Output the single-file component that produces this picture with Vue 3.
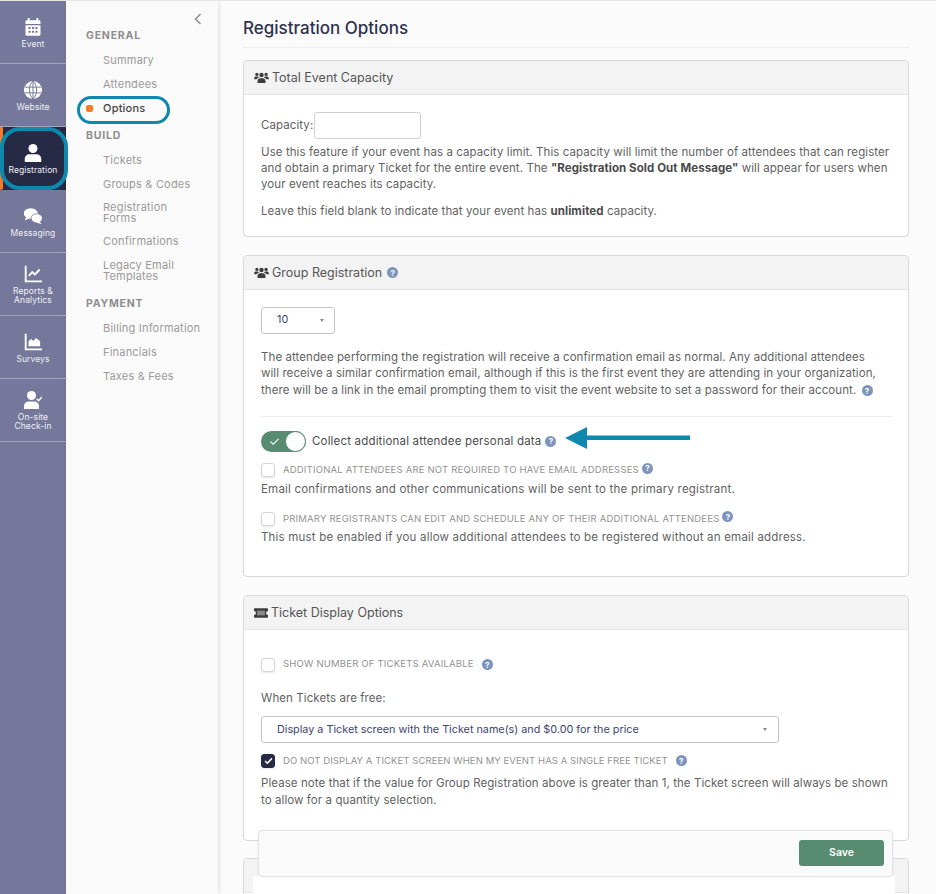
<template>
  <div class="page">
    <aside class="rail">
      <div v-for="item in railItems" :key="item.name" class="rail-item" :class="{ active: item.active }">
        <svg class="rail-icon" viewBox="0 0 24 24" fill="currentColor">
          <template v-if="item.icon === 'calendar'">
            <path d="M5 0h2.500v3h9V0H19v3h1.500A1.500 1.500 0 0 1 22 4.500V8H2V4.500A1.500 1.500 0 0 1 3.500 3H5z" />
            <path fill-rule="evenodd" d="M2 9.500h20v12a2 2 0 0 1-2 2H4a2 2 0 0 1-2-2zM6 12v2.800h2.800V12zm4.600 0v2.800h2.800V12zm4.600 0v2.800H18V12zM6 17v2.800h2.800V17zm4.600 0v2.800h2.800V17zm4.600 0v2.800H18V17z" />
          </template>
          <template v-else-if="item.icon === 'globe'">
            <circle cx="12" cy="12" r="12" />
            <path d="M1 8.200h22M1 15.800h22M12 0v24M12 0C5.500 6 5.500 18 12 24M12 0c6.500 6 6.500 18 0 24" fill="none" stroke="#75789a" stroke-width="1.300" />
          </template>
          <template v-else-if="item.icon === 'user'">
            <circle cx="12" cy="6" r="6" />
            <path d="M1 24v-4c0-4 3-6.500 6.500-6.500h9c3.500 0 6.500 2.500 6.500 6.500v4z" />
          </template>
          <template v-else-if="item.icon === 'comments'">
            <ellipse cx="9" cy="8.500" rx="9.500" ry="7" />
            <path d="M3 13 1 18l6.500-3z" />
            <ellipse cx="17" cy="15" rx="7.500" ry="6" stroke="#75789a" stroke-width="1" />
            <path d="M20.500 19l3 3.500-7-1.500z" />
          </template>
          <template v-else-if="item.icon === 'chart-line'">
            <path d="M1 1h2.500v19.500H24V23H1z" />
            <path d="M6.500 14.500l4.500-5 3.500 3 6.500-6.500" fill="none" stroke="currentColor" stroke-width="2.600" />
          </template>
          <template v-else-if="item.icon === 'chart-area'">
            <path d="M1 1h2.500v19.500H24V23H1z" />
            <path d="M6 17.500V11l3.500-3 3 2.500L16 6.500l5.500 4.500v6.500z" />
          </template>
          <template v-else>
            <circle cx="10" cy="6" r="6" />
            <path d="M0 24v-3.500C0 16.500 3 14 6.500 14h7c3.500 0 6.500 2.500 6.500 6.500V24z" />
            <path d="M17 10.500l2.500 2.500 4.500-5" fill="none" stroke="currentColor" stroke-width="1.900" />
          </template>
        </svg>
        <span class="rail-label">{{ item.name }}</span>
      </div>
    </aside>

    <nav class="subnav">
      <svg class="collapse" viewBox="0 0 8 12"><path d="M6.500 1 1.500 6l5 5" fill="none" stroke="#8d8d8d" stroke-width="1.500" /></svg>
      <template v-for="group in navGroups" :key="group.title">
        <div class="nav-title">{{ group.title }}</div>
        <div v-for="link in group.links" :key="link" class="nav-link" :class="{ current: link === 'Options', tight: link === 'Registration Forms' }">
          {{ link }}
        </div>
      </template>
    </nav>

    <main class="content">
      <h1>Registration Options</h1>

      <section class="card first">
        <header>
          <svg class="users" viewBox="0 0 24 18" fill="currentColor"><use href="#users-shape" /></svg>
          Total Event Capacity
        </header>
        <div class="body">
          <div class="capacity">Capacity: <span class="input"></span></div>
          <p>Use this feature if your event has a capacity limit. This capacity will limit the number of attendees that can register and obtain a primary Ticket for the entire event. The <b>"Registration Sold Out Message"</b> will appear for users when your event reaches its capacity.</p>
          <p class="gap">Leave this field blank to indicate that your event has <b>unlimited</b> capacity.</p>
        </div>
      </section>

      <section class="card second">
        <header>
          <svg class="users" viewBox="0 0 24 18" fill="currentColor">
            <defs>
              <g id="users-shape">
                <circle cx="12" cy="5" r="3.600" />
                <path d="M5.500 18v-3c0-3 2-4.800 4-4.800h5c2 0 4 1.800 4 4.800v3z" />
                <circle cx="4.500" cy="4" r="2.700" />
                <circle cx="19.500" cy="4" r="2.700" />
                <path d="M0 12v-1.500C0 8.500 1.500 7.500 3 7.500h3.500c.4 1 1 1.700 1.500 2C5.500 10 4.300 11 4 12zM24 12v-1.500c0-2-1.500-3-3-3h-3.500c-.4 1-1 1.700-1.500 2 2.500.5 3.700 1.500 4 2.500z" />
              </g>
            </defs>
            <use href="#users-shape" />
          </svg>
          Group Registration <i class="help">?</i>
        </header>
        <div class="body">
          <div class="select small"><span>10</span><em></em></div>
          <p class="intro">The attendee performing the registration will receive a confirmation email as normal. Any additional attendees will receive a similar confirmation email, although if this is the first event they are attending in your organization, there will be a link in the email prompting them to visit the event website to set a password for their account. <i class="help">?</i></p>
          <hr />
          <div class="toggle-row">
            <span class="toggle">
              <svg viewBox="0 0 12 10"><path d="M1.500 5.200 4.500 8l6-6" fill="none" stroke="#fff" stroke-width="1.200" /></svg>
              <span class="knob"></span>
            </span>
            Collect additional attendee personal data <i class="help">?</i>
          </div>
          <div class="check-row one"><span class="box"></span><span class="caps">Additional attendees are not required to have email addresses</span><i class="help up">?</i></div>
          <p class="note">Email confirmations and other communications will be sent to the primary registrant.</p>
          <div class="check-row two"><span class="box"></span><span class="caps">Primary registrants can edit and schedule any of their additional attendees</span><i class="help up">?</i></div>
          <p class="note">This must be enabled if you allow additional attendees to be registered without an email address.</p>
        </div>
      </section>

      <section class="card third">
        <header>
          <svg class="ticket" viewBox="0 0 18 12"><path d="M1 0h16a1 1 0 0 1 1 1v2.500a2.500 2.500 0 0 0 0 5V11a1 1 0 0 1-1 1H1a1 1 0 0 1-1-1V8.500a2.500 2.500 0 0 0 0-5V1a1 1 0 0 1 1-1z" fill="#3d3d3d" /><rect x="4" y="3" width="10" height="6" fill="#8a8a8a" /></svg>
          Ticket Display Options
        </header>
        <div class="body">
          <div class="check-row three"><span class="box"></span><span class="caps">Show number of tickets available</span><i class="help wide">?</i></div>
          <p class="free-label">When Tickets are free:</p>
          <div class="select large"><span>Display a Ticket screen with the Ticket name(s) and $0.00 for the price</span><em></em></div>
          <div class="check-row four">
            <span class="box checked"><svg viewBox="0 0 12 10"><path d="M1.500 5 4.500 8l6-6.500" fill="none" stroke="#fff" stroke-width="2" /></svg></span>
            <span class="caps">Do not display a Ticket screen when my event has a single free Ticket</span><i class="help wide">?</i>
          </div>
          <p class="note">Please note that if the value for Group Registration above is greater than 1, the Ticket screen will always be shown to allow for a quantity selection.</p>
        </div>
      </section>

      <section class="card last"><header></header></section>
    </main>

    <!-- callouts and the sticky bar sit over the page -->
    <div class="ring ring-nav"></div>
    <div class="ring ring-rail"></div>
    <svg class="arrow" viewBox="0 0 125 22"><path d="M0 11 22 0v8.500h103v4.500H22v9z" fill="#0e88ad" /></svg>
    <div class="save-wrap">
      <div class="save-bar"><button>Save</button></div>
    </div>
  </div>
</template>

<script setup>
const railItems = [
  { name: "Event", icon: "calendar" },
  { name: "Website", icon: "globe" },
  { name: "Registration", icon: "user", active: true },
  { name: "Messaging", icon: "comments" },
  { name: "Reports &\nAnalytics", icon: "chart-line" },
  { name: "Surveys", icon: "chart-area" },
  { name: "On-site\nCheck-in", icon: "user-check" },
];

const navGroups = [
  { title: "GENERAL", links: ["Summary", "Attendees", "Options"] },
  { title: "BUILD", links: ["Tickets", "Groups & Codes", "Registration Forms", "Confirmations", "Legacy Email Templates"] },
  { title: "PAYMENT", links: ["Billing Information", "Financials", "Taxes & Fees"] },
];
</script>

<style>
html,
body {
  margin: 0;
  background: #fbfbfb;
}
</style>

<style scoped>
.page {
  position: relative;
  display: flex;
  width: 936px;
  height: 894px;
  overflow: hidden;
  border-top: 1px solid #e6e6e6;
  box-sizing: border-box;
  font-family: Inter, "Open Sans", sans-serif;
  color: #5c5c5c;
  background: #fbfbfb;
}

.rail {
  flex: none;
  width: 66px;
  background: #75789a;
}

.rail-item {
  display: flex;
  flex-direction: column;
  align-items: center;
  justify-content: center;
  box-sizing: border-box;
  height: 63px;
  padding-top: 2px;
  border-bottom: 1px solid #a2a4bb;
  color: #fff;
}

.rail-item.active {
  background: #272a45;
  border-left: 3px solid #f47b2a;
  border-bottom-color: #272a45;
  padding-right: 3px;
}

.rail-icon {
  width: 18px;
  height: 18px;
  margin-bottom: 4px;
}

.rail-label {
  font-size: 8.500px;
  line-height: 9px;
  letter-spacing: 0.1px;
  text-align: center;
  white-space: pre-line;
  color: #f0f0f5;
}

.subnav {
  position: relative;
  flex: none;
  box-sizing: border-box;
  width: 152px;
  padding: 28px 0 0 20px;
  background: #fafafa;
  box-shadow: 1px 0 4px rgba(0, 0, 0, 0.12);
}

.collapse {
  position: absolute;
  top: 12px;
  right: 16px;
  width: 8px;
  height: 12px;
}

.nav-title {
  height: 13px;
  margin: 15px 0 13px;
  font-size: 10.500px;
  line-height: 13px;
  font-weight: 700;
  letter-spacing: 0.8px;
  color: #8e8e8e;
}

.nav-title:first-of-type {
  margin-top: 0;
}

.nav-link {
  position: relative;
  max-width: 99px;
  margin: 0 0 13px 17px;
  font-size: 11px;
  line-height: 11px;
  letter-spacing: 0.2px;
  color: #9a9a9a;
}

.nav-link.tight {
  margin-top: -1px;
  margin-bottom: 12px;
}

.nav-link.current {
  color: #444;
  font-weight: 500;
}

.nav-link.current::before {
  content: "";
  position: absolute;
  left: -17px;
  top: 2px;
  width: 7px;
  height: 7px;
  border-radius: 2px;
  background: #f47b2a;
}

.content {
  flex: 1;
  box-sizing: border-box;
  padding: 0 27px 0 25px;
  min-width: 0;
}

h1 {
  margin: 0 0 12px;
  padding: 17px 0 9px;
  font-size: 17px;
  line-height: 20px;
  font-weight: 500;
  color: #2e3350;
  border-bottom: 1px solid #eeeeee;
}

.card {
  box-sizing: border-box;
  margin-bottom: 18px;
  border: 1px solid #d8d8d8;
  border-radius: 4px;
  background: #fff;
}

.card.first {
  height: 177px;
}

.card.second {
  height: 322px;
}

.card.third {
  height: 246px;
  margin-bottom: 17px;
}

.card.last {
  height: 60px;
}

.card header {
  display: flex;
  align-items: center;
  gap: 3px;
  height: 33px;
  padding: 0 10px;
  font-size: 12.500px;
  color: #555;
  background: #f3f3f3;
  border-bottom: 1px solid #e4e4e4;
  border-radius: 4px 4px 0 0;
}

.users {
  width: 15px;
  height: 11px;
  color: #3d3d3d;
}

.ticket {
  width: 14px;
  height: 10px;
}

.help {
  display: inline-flex;
  align-items: center;
  justify-content: center;
  width: 11px;
  height: 11px;
  margin-left: 2px;
  border-radius: 50%;
  font-size: 8px;
  line-height: 1;
  letter-spacing: 0;
  font-style: normal;
  font-weight: 700;
  color: #fff;
  background: #7d95bd;
}

.body {
  padding: 17px 16px 0 17px;
  font-size: 11.500px;
  line-height: 16.300px;
  letter-spacing: 0.08px;
  color: #626262;
}

p {
  margin: 0;
}

b {
  font-weight: 700;
  color: #4a4a4a;
}

.gap {
  margin-top: 11px;
}

.capacity {
  display: flex;
  align-items: center;
  gap: 1px;
  margin-bottom: 4.500px;
}

.input {
  width: 105px;
  height: 25px;
  border: 1px solid #cfcfcf;
  border-radius: 3px;
  background: #fff;
}

.select {
  display: flex;
  align-items: center;
  justify-content: space-between;
  box-sizing: border-box;
  height: 27px;
  font-size: 10.800px;
  letter-spacing: 0;
  border: 1px solid #c4c4c4;
  border-radius: 3px;
  color: #3d4470;
  background: #fff;
}

.select em {
  width: 0;
  height: 0;
  border-left: 2.500px solid transparent;
  border-right: 2.500px solid transparent;
  border-top: 3.500px solid #888;
}

.select.small {
  width: 74px;
  padding: 0 10px 0 15px;
}

.select.large {
  width: 518px;
  padding: 0 11px 0 15px;
}

.intro {
  margin-top: 15px;
  padding-right: 6px;
}

hr {
  margin: 18px 0 14px;
  border: 0;
  border-top: 1px solid #eeeeee;
}

.toggle-row {
  display: flex;
  align-items: center;
  height: 21px;
  margin-bottom: 11px;
  letter-spacing: 0.18px;
  color: #4c4c4c;
}

.toggle-row .help {
  margin-left: 4px;
}

.toggle {
  position: relative;
  display: block;
  box-sizing: border-box;
  width: 45px;
  height: 21px;
  margin-right: 6px;
  border-radius: 11px;
  background: #588c72;
}

.toggle svg {
  position: absolute;
  left: 8px;
  top: 6px;
  width: 11px;
  height: 9px;
}

.knob {
  position: absolute;
  right: 0;
  top: 0;
  box-sizing: border-box;
  width: 21px;
  height: 21px;
  border: 1px solid #588c72;
  border-radius: 50%;
  background: #fff;
}

.check-row {
  display: flex;
  align-items: center;
  height: 15px;
}

.box {
  flex: none;
  box-sizing: border-box;
  display: flex;
  align-items: center;
  justify-content: center;
  width: 14px;
  height: 14px;
  margin-right: 8px;
  border: 1px solid #d5d5d5;
  border-radius: 3px;
  background: #fff;
  box-shadow: 0 1px 2px rgba(0, 0, 0, 0.1);
}

.box.checked {
  border-color: #272a45;
  background: #272a45;
}

.box.checked svg {
  width: 9px;
  height: 8px;
}

.caps {
  font-size: 9.500px;
  letter-spacing: 0.2px;
  text-transform: uppercase;
  color: #929292;
}

.help.up {
  margin: -4px 0 0 3px;
}

.help.wide {
  margin-left: 8px;
}

.note {
  margin-top: 3px;
}

.second .note {
  letter-spacing: 0.2px;
}

.check-row.two {
  margin-top: 14px;
}

.check-row.three {
  margin-top: 10px;
}

.free-label {
  margin: 18px 0 10px;
}

.check-row.four {
  margin-top: 10px;
}

.check-row.four .caps {
  letter-spacing: 0.08px;
}

.check-row.four + .note {
  margin-top: 7px;
}

.ring {
  position: absolute;
  box-sizing: border-box;
  border: 3.500px solid #0e88ad;
}

.ring-nav {
  left: 77px;
  top: 95px;
  width: 93px;
  height: 28px;
  border-radius: 14px;
}

.ring-rail {
  left: 0;
  top: 126px;
  width: 68px;
  height: 63px;
  border-width: 4px;
  border-radius: 20px;
}

.arrow {
  position: absolute;
  left: 565px;
  top: 426px;
  width: 125px;
  height: 22px;
}

.save-wrap {
  position: absolute;
  left: 253px;
  top: 829px;
  width: 642px;
  height: 65px;
  padding: 0 2px 0 5px;
  box-sizing: border-box;
  background: linear-gradient(transparent 0, transparent 46px, #fff 46px);
}

.save-bar {
  display: flex;
  align-items: center;
  justify-content: flex-end;
  box-sizing: border-box;
  height: 47px;
  padding: 0 8px 2px 0;
  border: 1px solid #e2e2e2;
  border-radius: 4px;
  background: #fafafa;
  box-shadow: 0 0 3px rgba(0, 0, 0, 0.05);
}

button {
  width: 85px;
  height: 26px;
  border: 0;
  border-radius: 3px;
  font-family: inherit;
  font-size: 10.500px;
  font-weight: 600;
  color: #fff;
  background: #588c72;
}
</style>
